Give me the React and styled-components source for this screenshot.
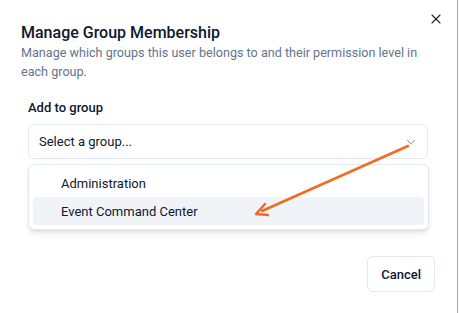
import styled, { createGlobalStyle } from 'styled-components';
import { X, ChevronDown } from 'lucide-react';

const GlobalStyle = createGlobalStyle`
  html, body { margin: 0; padding: 0; background: #ffffff; }
  body { font-family: Roboto, Lato, sans-serif; color: #0f172a; }
`;

const Dialog = styled.div`
  position: relative;
  width: 458px;
  height: 313px;
  box-sizing: border-box;
  border-right: 1px solid #9ca3af;
  background: #fff;
  padding: 23px 29px 0 21px;
`;

const CloseButton = styled.button`
  position: absolute;
  top: 11px;
  right: 13px;
  border: none;
  background: none;
  padding: 0;
  color: #1e293b;
  display: flex;
`;

const Title = styled.h2`
  margin: 0;
  font-size: 16px;
  font-weight: 500;
  line-height: 20px;
  color: #0f172a;
`;

const Description = styled.p`
  margin: 0;
  font-size: 12.6px;
  line-height: 19px;
  color: #64748b;
`;

const Field = styled.div`
  margin: 18px 0 0 7px;
  display: flex;
  flex-direction: column;
  gap: 7px;
`;

const Label = styled.label`
  font-size: 13px;
  font-weight: 500;
  line-height: 18px;
  color: #0f172a;
`;

const SelectWrap = styled.div`
  position: relative;
`;

const Trigger = styled.button`
  width: 100%;
  height: 35px;
  box-sizing: border-box;
  display: flex;
  align-items: center;
  justify-content: space-between;
  padding: 0 9px 0 10px;
  border: 1px solid #e2e8f0;
  border-radius: 6px;
  background: #fff;
  font-family: inherit;
  font-size: 13px;
  color: #0f172a;
  svg { color: #64748b; }
`;

const Popover = styled.div`
  position: absolute;
  left: 0;
  right: -1px;
  top: calc(100% + 5px);
  box-sizing: border-box;
  padding: 4px;
  border: 1px solid #e2e8f0;
  border-radius: 6px;
  background: #fff;
  box-shadow: 0 4px 6px -1px rgba(0, 0, 0, 0.1), 0 2px 4px -2px rgba(0, 0, 0, 0.1);
  z-index: 2;
`;

const Option = styled.div`
  height: 28px;
  display: flex;
  align-items: center;
  padding-left: 28px;
  border-radius: 3px;
  font-size: 13px;
  color: #0f172a;
  background: ${p => (p.$active ? '#f0f3f8' : 'transparent')};
`;

const Footer = styled.div`
  display: flex;
  justify-content: flex-end;
  margin: 97px -7px 0 0;
`;

const Button = styled.button`
  height: 36px;
  padding: 0 13px;
  border: 1px solid #e2e8f0;
  border-radius: 6px;
  background: #fff;
  font-family: inherit;
  font-size: 13px;
  font-weight: 500;
  color: #0f172a;
`;

const Annotation = styled.svg`
  position: absolute;
  left: 0;
  top: 0;
  pointer-events: none;
  z-index: 3;
`;

export default function App() {
  return (
    <>
      <GlobalStyle />
      <Dialog>
        <CloseButton aria-label="Close">
          <X size={16} strokeWidth={1.75} />
        </CloseButton>
        <Title>Manage Group Membership</Title>
        <Description>
          Manage which groups this user belongs to and their permission level in each group.
        </Description>
        <Field>
          <Label>Add to group</Label>
          <SelectWrap>
            <Trigger>
              <span>Select a group...</span>
              <ChevronDown size={14} strokeWidth={1.5} />
            </Trigger>
            <Popover>
              <Option>Administration</Option>
              <Option $active>Event Command Center</Option>
            </Popover>
          </SelectWrap>
        </Field>
        <Footer>
          <Button>Cancel</Button>
        </Footer>
        <Annotation width="459" height="313" viewBox="0 0 459 313">
          <line x1="408" y1="146" x2="262" y2="211" stroke="#f26b21" strokeWidth="2.5" strokeLinecap="round" />
          <path d="M265 204 L256 214 L268 215" fill="none" stroke="#f26b21" strokeWidth="2.5" strokeLinecap="round" strokeLinejoin="round" />
        </Annotation>
      </Dialog>
    </>
  );
}
